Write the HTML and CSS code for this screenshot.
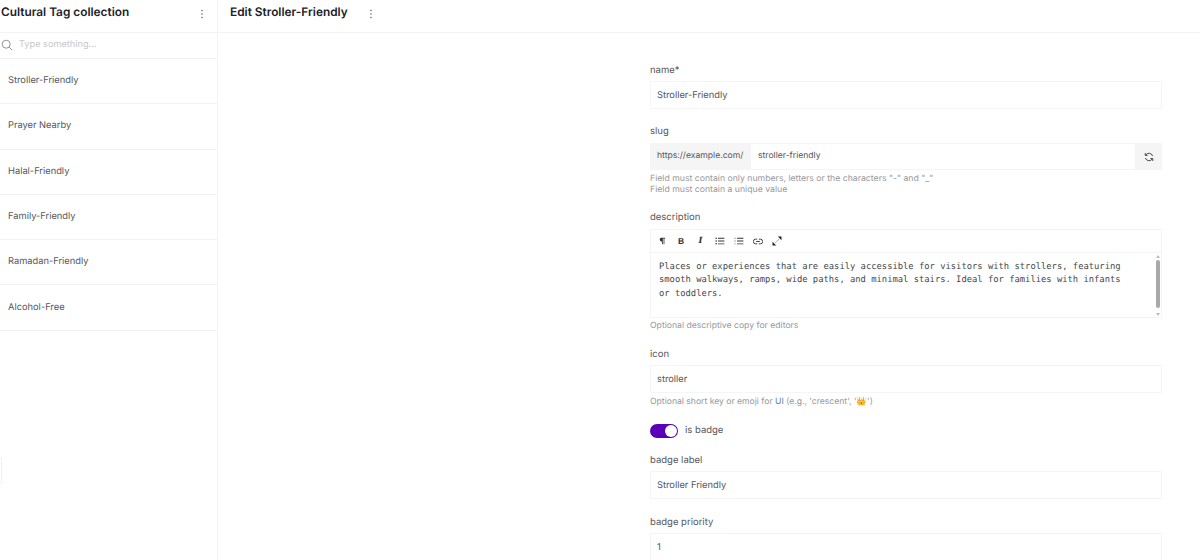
FILE: index.html
```html
<!DOCTYPE html>
<html lang="en">
<head>
<meta charset="utf-8">
<title>Edit Stroller-Friendly</title>
<link rel="stylesheet" href="styles.css">
</head>
<body>
<div class="app">
  <aside class="sidebar">
    <header class="side-head">
      <h2>Cultural Tag collection</h2>
      <svg class="dots" viewBox="0 0 4 12" width="4" height="12"><circle cx="2" cy="2.5" r=".8"/><circle cx="2" cy="6" r=".8"/><circle cx="2" cy="9.500" r=".8"/></svg>
    </header>
    <div class="search">
      <svg viewBox="0 0 12 12" width="12" height="12" fill="none" stroke="#777" stroke-width=".8"><circle cx="5.200" cy="5.200" r="4"/><path d="M8.200 8.200l3 3"/></svg>
      <span>Type something...</span>
    </div>
    <ul class="list">
      <li>Stroller-Friendly</li>
      <li>Prayer Nearby</li>
      <li>Halal-Friendly</li>
      <li>Family-Friendly</li>
      <li>Ramadan-Friendly</li>
      <li>Alcohol-Free</li>
    </ul>
    <div class="edge-tab"></div>
  </aside>
  <main class="main">
    <header class="main-head">
      <h2>Edit Stroller-Friendly</h2>
      <svg class="dots" viewBox="0 0 4 12" width="4" height="12"><circle cx="2" cy="2.5" r=".8"/><circle cx="2" cy="6" r=".8"/><circle cx="2" cy="9.500" r=".8"/></svg>
    </header>
    <form class="form">
      <label class="lab lab-first">name*</label>
      <div class="input">Stroller-Friendly</div>

      <label class="lab lab-slug">slug</label>
      <div class="slug">
        <span class="prefix">https://example.com/</span>
        <span class="slug-val">stroller-friendly</span>
        <span class="refresh">
          <svg viewBox="0 0 12 12" width="10" height="10" fill="none" stroke="#333" stroke-width="1.100"><path d="M10.300 4.800A4.500 4.500 0 0 0 2.300 3.400"/><path d="M1.700 7.200a4.500 4.500 0 0 0 8 1.400"/><path d="M1.500 1.300v2.800h2.800M10.500 10.700V7.900H7.700"/></svg>
        </span>
      </div>
      <p class="help help-slug">Field must contain only numbers, letters or the characters "-" and "_"<br>Field must contain a unique value</p>

      <label class="lab lab-desc">description</label>
      <div class="editor">
        <div class="toolbar">
          <svg class="tool" viewBox="0 0 10 10" width="8" height="8" fill="#333"><path d="M4 1h5v1H8v7H7V2H6v7H5V5.500H4a2.300 2.300 0 0 1 0-4.500z"/></svg>
          <b class="tool tb-b">B</b>
          <i class="tool tb-i">I</i>
          <svg class="tool" viewBox="0 0 12 10" width="10" height="8" fill="#333"><circle cx="1.200" cy="1.500" r="1"/><circle cx="1.200" cy="5" r="1"/><circle cx="1.200" cy="8.500" r="1"/><path d="M3.500 1h8v1.100h-8zM3.500 4.500h8v1.100h-8zM3.500 8h8v1.100h-8z"/></svg>
          <svg class="tool" viewBox="0 0 12 10" width="10" height="8" fill="#333"><path d="M.5 1h1v1.100h-1zM.5 4.500h1v1.100h-1zM.5 8h1v1.100h-1zM3.500 1h8v1.100h-8zM3.500 4.500h8v1.100h-8zM3.500 8h8v1.100h-8z"/></svg>
          <svg class="tool" viewBox="0 0 12 8" width="10" height="7" fill="none" stroke="#333" stroke-width="1.100"><path d="M5 1.200H3.200a2.800 2.800 0 0 0 0 5.600H5M7 1.200h1.800a2.800 2.800 0 0 1 0 5.600H7M3.800 4h4.400"/></svg>
          <svg class="tool" viewBox="0 0 10 10" width="10" height="10" fill="#222"><path d="M5.800.5h3.700v3.700zM4.200 9.500H.5V5.800z"/><path d="M6.500 3.500L5.500 4.500M3.500 6.500l1-1" stroke="#222" stroke-width=".7"/></svg>
        </div>
        <div class="editor-body">
          <p class="code">Places or experiences that are easily accessible for visitors with strollers, featuring smooth walkways, ramps, wide paths, and minimal stairs. Ideal for families with infants or toddlers.</p>
          <div class="scroll"><span class="thumb"></span></div>
        </div>
      </div>
      <p class="help help-desc">Optional descriptive copy for editors</p>

      <label class="lab lab-icon">icon</label>
      <div class="input input-icon">stroller</div>
      <p class="help help-icon">Optional short key or emoji for <span class="ui">UI</span> (e.g., 'crescent', '<span class="crown">👑</span>')</p>

      <div class="toggle-row">
        <span class="toggle"><span class="knob"></span></span>
        <span class="toggle-label">is badge</span>
      </div>

      <label class="lab lab-badge">badge label</label>
      <div class="input">Stroller Friendly</div>

      <label class="lab lab-prio">badge priority</label>
      <div class="input">1</div>
    </form>
  </main>
</div>
</body>
</html>
```
FILE: styles.css
```css
* { box-sizing: border-box; }
html, body { margin: 0; height: 100%; overflow: hidden; background: #fff; }
body { font-family: Inter, "Liberation Sans", sans-serif; font-size: 9.3px; color: #54565a; text-rendering: geometricPrecision; }
.app { display: flex; height: 560px; overflow: hidden; }
.sidebar { position: relative; width: 218px; flex: none; border-right: 1px solid #f3f3f3; }
.side-head, .main-head { height: 33px; border-bottom: 1px solid #f3f3f3; display: flex; align-items: flex-start; }
.side-head { padding: 5px 13px 0 1px; justify-content: space-between; }
h2 { margin: 0; font-size: 11.85px; line-height: 14px; font-weight: 600; color: #202125; }
.dots { fill: #666; margin-top: 3px; }
.search { height: 26px; border-bottom: 1px solid #f3f3f3; display: flex; align-items: center; gap: 6px; padding: 0 0 2px 1px; color: #c6c7c9; font-size: 9.2px; }
.list { list-style: none; margin: 0; padding: 0; }
.list li { height: 45.300px; border-bottom: 1px solid #f3f3f3; padding: 16.2px 0 0 8px; line-height: 12px; }
.edge-tab { position: absolute; left: 0; top: 457px; width: 2px; height: 27px; border: 1px solid #f1f1f1; border-left: 0; border-radius: 0 2px 2px 0; }
.main { flex: 1; min-width: 0; }
.main-head { padding: 5px 0 0 12px; gap: 21px; }
.form { width: 512px; margin-left: 432px; display: flex; flex-direction: column; }
.lab { display: block; line-height: 12px; position: relative; top: 1px; font-size: 9.5px; }
.lab-first { margin-top: 31px; margin-bottom: 5px; }
.lab-slug { margin-top: 16px; margin-bottom: 6px; }
.lab-desc { margin-top: 16px; margin-bottom: 6px; }
.lab-icon { margin-top: 16px; margin-bottom: 5px; }
.lab-badge { margin-top: 15px; margin-bottom: 6px; top: 1.5px; }
.lab-prio { margin-top: 16px; margin-bottom: 6px; top: 1.5px; }
.input { height: 28px; border: 1px solid #f5f5f5; padding: 1px 6px 0; display: flex; align-items: center; }
.slug { height: 27px; border-top: 1px solid #f5f5f5; border-bottom: 1px solid #f5f5f5; display: flex; align-items: center; font-size: 8.6px; }
.prefix { width: 101px; height: 27px; margin-top: -1px; margin-bottom: -1px; flex: none; background: #f5f5f5; padding: 0 0 1px 7px; display: flex; align-items: center; }
.slug-val { flex: 1; padding: 0 0 1px 7px; }
.refresh { width: 27px; height: 27px; margin-top: -1px; margin-bottom: -1px; flex: none; background: #f5f5f5; display: flex; align-items: center; justify-content: center; }
.help { margin: 0; color: #97989b; font-size: 8.65px; line-height: 11px; }
.help-slug { margin-top: 3.5px; margin-bottom: -0.5px; font-size: 8.7px; }
.help-desc { margin-top: 3px; }
.help-icon { margin-top: 4px; font-size: 8.6px; }
.ui { color: #5a7fa8; }
.crown { font-size: 8.5px; }
.editor { height: 89px; border: 1px solid #f5f5f5; }
.toolbar { height: 23px; border-bottom: 1px solid #f5f5f5; display: flex; align-items: center; gap: 9.2px; padding-left: 6px; }
.tool { flex: none; width: 10px; }
.tb-b, .tb-i { font: 8.5px "DejaVu Serif", "Liberation Serif", serif; color: #333; text-align: center; }
.tb-b { font-weight: 700; font-family: "Liberation Sans", sans-serif; }
.tb-i { font-weight: 700; font-style: italic; }
.editor-body { position: relative; height: 64px; padding: 8px 30px 0 8px; }
.code { margin: 0; font-family: "DejaVu Sans Mono", "Liberation Mono", monospace; font-size: 8.820px; line-height: 13.300px; color: #44474b; }
.scroll { position: absolute; right: 0; top: 0; width: 7px; height: 64px; }
.scroll::before { content: ""; position: absolute; left: 2px; top: 2px; border: 2px solid transparent; border-top: 0; border-bottom: 3px solid #bbb; }
.scroll::after { content: ""; position: absolute; left: 2px; bottom: 1px; border: 2px solid transparent; border-bottom: 0; border-top: 3px solid #bbb; }
.thumb { position: absolute; left: 2px; top: 7px; width: 4px; height: 48px; background: #a9a9a9; border-radius: 2px; }
.toggle-row { display: flex; align-items: center; gap: 7px; margin-top: 16px; height: 14px; }
.toggle { width: 28px; height: 14px; border-radius: 7px; background: #5a00b8; display: flex; align-items: center; justify-content: flex-end; padding-right: 1px; flex: none; }
.knob { width: 12px; height: 12px; border-radius: 50%; background: #fff; }
.toggle-label { position: relative; top: -1px; font-size: 9.5px; }
```
